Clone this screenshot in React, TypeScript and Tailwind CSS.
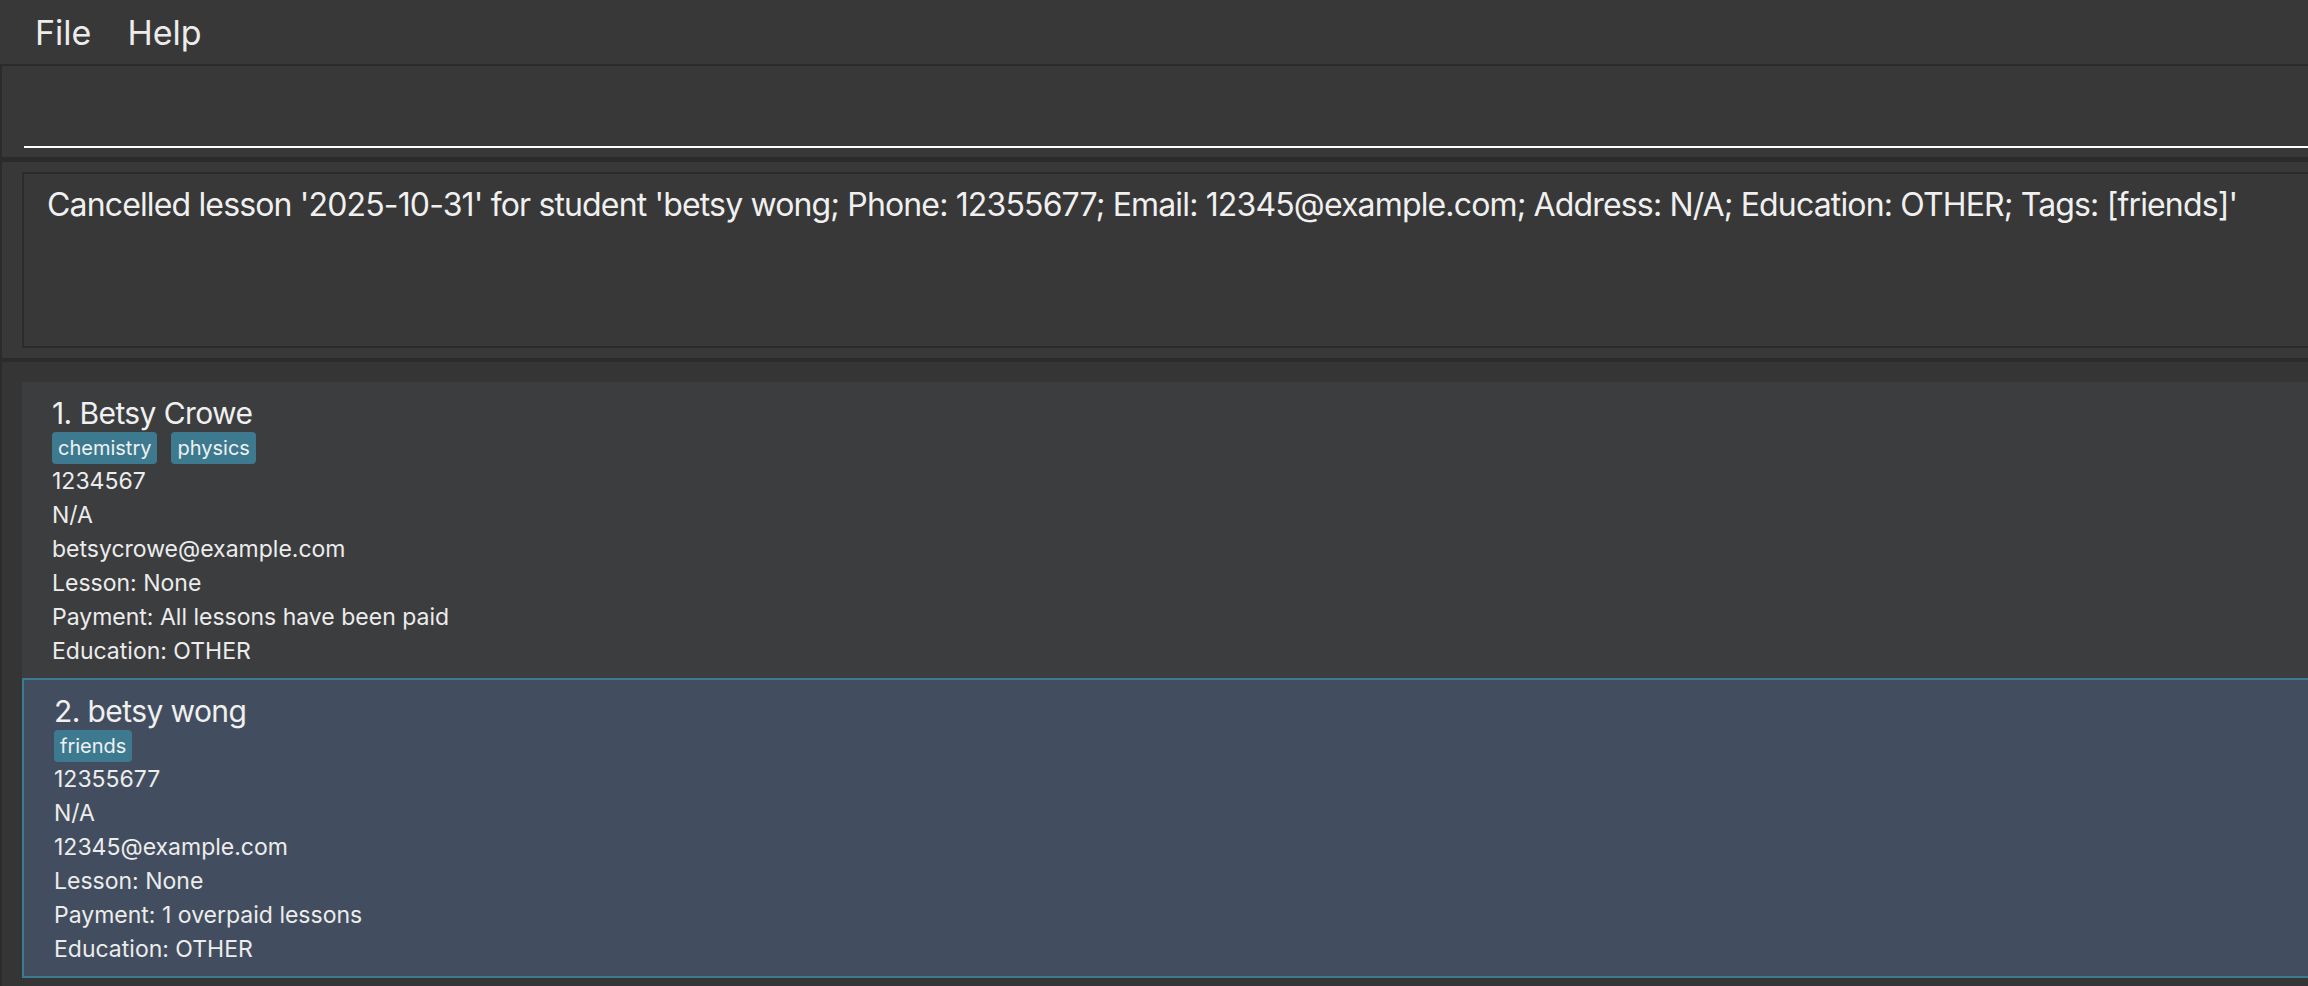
import React from "react";

type Student = {
  index: number;
  name: string;
  tags: string[];
  phone: string;
  address: string;
  email: string;
  lesson: string;
  payment: string;
  education: string;
};

const students: Student[] = [
  {
    index: 1,
    name: "Betsy Crowe",
    tags: ["chemistry", "physics"],
    phone: "1234567",
    address: "N/A",
    email: "betsycrowe@example.com",
    lesson: "None",
    payment: "All lessons have been paid",
    education: "OTHER",
  },
  {
    index: 2,
    name: "betsy wong",
    tags: ["friends"],
    phone: "12355677",
    address: "N/A",
    email: "12345@example.com",
    lesson: "None",
    payment: "1 overpaid lessons",
    education: "OTHER",
  },
];

const resultText =
  "Cancelled lesson '2025-10-31' for student 'betsy wong; Phone: 12355677; Email: 12345@example.com; Address: N/A; Education: OTHER; Tags: [friends]'";

function StudentCard({ s, selected }: { s: Student; selected: boolean }) {
  return (
    <div
      className={
        selected
          ? "h-[300px] border-2 border-[#3b7b8f] bg-[#424e5f] pl-[30px] pt-[13px]"
          : "h-[296px] bg-[#3c3d3f] pl-[30px] pt-[13px]"
      }
    >
      <div className="h-[37px] text-[30px] leading-[37px] tracking-[-0.6px] text-[#f0f0f0]">
        {s.index}. {s.name}
      </div>
      <div className="flex h-[32px] gap-[14px]">
        {s.tags.map((t) => (
          <span
            key={t}
            className="flex h-[32px] items-center rounded-[4px] bg-[#3e7a8f] px-[6px] text-[20px] text-[#eef2f4]"
          >
            {t}
          </span>
        ))}
      </div>
      <div className="text-[23px] leading-[34px] text-[#ececec]">
        <div>{s.phone}</div>
        <div>{s.address}</div>
        <div>{s.email}</div>
        <div>Lesson: {s.lesson}</div>
        <div>Payment: {s.payment}</div>
        <div>Education: {s.education}</div>
      </div>
    </div>
  );
}

export default function App() {
  return (
    <div
      className="h-[986px] w-full overflow-hidden bg-[#383838]"
      style={{ fontFamily: "Inter, 'Noto Sans', sans-serif" }}
    >
      <div className="flex h-[986px] w-[2340px] flex-col">
        {/* menu bar */}
        <div className="flex h-[64px] items-center gap-[36px] pl-[35px] text-[34px] text-[#ececec]">
          <span>File</span>
          <span>Help</span>
        </div>
        <div className="h-[2px] bg-[#2b2b2b]" />

        {/* command box */}
        <div className="h-[91px] border-l-2 border-[#2b2b2b] pl-[22px]">
          <div className="h-[82px] border-b-2 border-white" />
        </div>
        <div className="h-[5px] bg-[#2b2b2b]" />

        {/* result display */}
        <div className="h-[196px] border-l-2 border-[#2b2b2b] pl-[20px] pt-[10px]">
          <div className="h-[176px] whitespace-nowrap border-2 border-[#2b2b2b] pl-[23px] pt-[11px] text-[32px] leading-[39px] tracking-[-0.85px] text-[#f0f0f0]">
            {resultText}
          </div>
        </div>
        <div className="h-[4px] bg-[#2b2b2b]" />

        {/* student list */}
        <div className="flex flex-1 flex-col border-l-2 border-[#2b2b2b] bg-[#353535] pl-[20px] pt-[20px]">
          {students.map((s, i) => (
            <StudentCard key={s.index} s={s} selected={i === 1} />
          ))}
        </div>
      </div>
    </div>
  );
}
